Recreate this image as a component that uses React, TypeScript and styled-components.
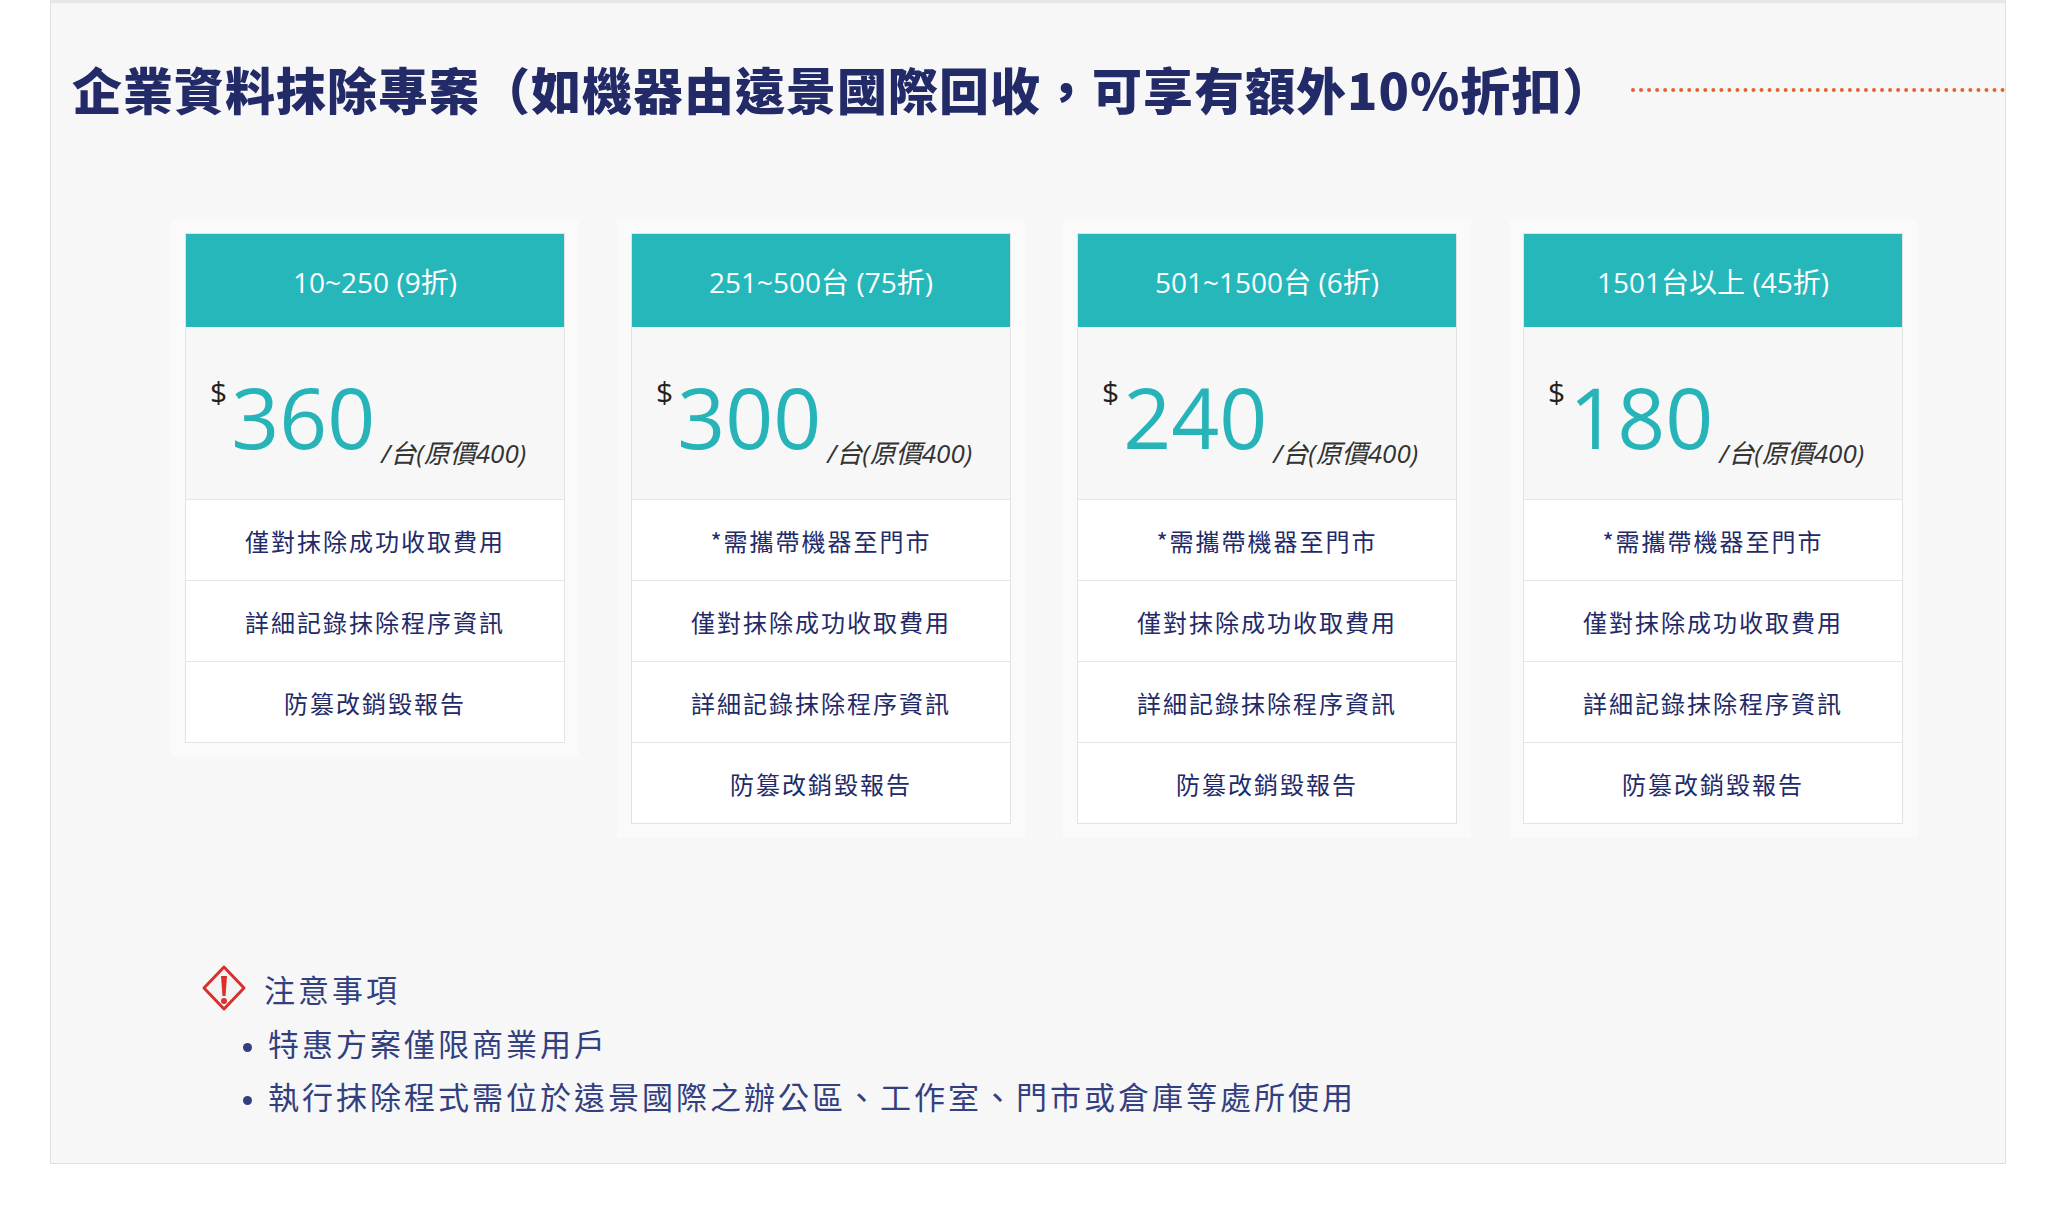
import styled, { createGlobalStyle } from "styled-components";

const Global = createGlobalStyle`
  body { margin: 0; background: #fff; font-family: "Open Sans", "Noto Sans CJK TC", sans-serif; }
`;

const Panel = styled.div`
  margin: 0 42px 0 50px;
  height: 1164px;
  box-sizing: border-box;
  background: #f7f7f7;
  border: 1px solid #e0e0e0;
  border-top: 3px solid #e6e6e6;
  padding: 50px 0 0 21px;
`;

const TitleRow = styled.div`
  display: flex;
  align-items: center;
  gap: 18px;
`;

const Title = styled.h1`
  margin: 0;
  font-family: "Noto Sans CJK TC", sans-serif;
  font-weight: 900;
  font-size: 50px;
  line-height: 70px;
  color: #232a68;
  white-space: nowrap;
  letter-spacing: 1px;
`;

const Dots = styled.div`
  flex: 1;
  border-top: 4px dotted #e8602c;
  margin-top: 4px;
`;

const Cards = styled.div`
  display: flex;
  align-items: flex-start;
  gap: 66px;
  margin: 110px 0 0 113px;
`;

const Card = styled.div`
  width: 378px;
  background: #fff;
  border: 1px solid #e3e3e3;
  box-shadow: 0 0 0 14px rgba(255, 255, 255, 0.35);
`;

const Head = styled.div`
  height: 93px;
  background: #26b7bb;
  color: #fff;
  display: flex;
  align-items: center;
  justify-content: center;
  font-size: 28px;
  font-family: "Open Sans", "Noto Sans CJK TC", sans-serif;
`;

const PriceBox = styled.div`
  height: 173px;
  background: #f7f7f7;
  display: flex;
  align-items: flex-end;
  padding: 0 0 42px 24px;
  box-sizing: border-box;
  border-bottom: 1px solid #e6e6e6;
`;

const Dollar = styled.span`
  font-size: 30px;
  color: #222;
  align-self: flex-start;
  margin-top: 44px;
  margin-right: 4px;
`;

const Amount = styled.span`
  font-size: 84px;
  line-height: 80px;
  color: #26b4b9;
`;

const Unit = styled.span`
  font-size: 26px;
  font-style: italic;
  color: #333;
  margin-left: 6px;
  margin-bottom: -14px;
  font-family: "Open Sans", "Noto Sans CJK TC", sans-serif;
`;

const Row = styled.div`
  height: 80px;
  display: flex;
  align-items: center;
  justify-content: center;
  font-family: "Noto Sans CJK TC", sans-serif;
  font-size: 24px;
  letter-spacing: 2px;
  color: #232a68;
  border-bottom: 1px solid #e6e6e6;
  &:last-child { border-bottom: none; }
`;

const Notes = styled.div`
  margin: 140px 0 0 128px;
  color: #33407f;
  font-family: "Noto Sans CJK TC", sans-serif;
`;

const NoteHead = styled.div`
  display: flex;
  align-items: center;
  gap: 16px;
  font-size: 31px;
  letter-spacing: 3px;
`;

const List = styled.ul`
  margin: 4px 0 0;
  padding-left: 68px;
  font-size: 31px;
  line-height: 53px;
  letter-spacing: 3px;
  li::marker { font-size: 24px; }
`;

const plans = [
  { head: "10~250 (9折)", price: "360", rows: ["僅對抹除成功收取費用", "詳細記錄抹除程序資訊", "防篡改銷毀報告"] },
  { head: "251~500台 (75折)", price: "300", rows: ["*需攜帶機器至門市", "僅對抹除成功收取費用", "詳細記錄抹除程序資訊", "防篡改銷毀報告"] },
  { head: "501~1500台 (6折)", price: "240", rows: ["*需攜帶機器至門市", "僅對抹除成功收取費用", "詳細記錄抹除程序資訊", "防篡改銷毀報告"] },
  { head: "1501台以上 (45折)", price: "180", rows: ["*需攜帶機器至門市", "僅對抹除成功收取費用", "詳細記錄抹除程序資訊", "防篡改銷毀報告"] },
];

function WarnIcon() {
  return (
    <svg width="48" height="48" viewBox="0 0 48 48">
      <path d="M24 3 L44 24 L24 45 L4 24 Z" fill="#f3f3f3" stroke="#d9302a" strokeWidth="3" strokeLinejoin="round" />
      <path d="M21 12 h6 l-1.5 20 h-3 Z" fill="#d9302a" />
      <circle cx="24" cy="37" r="3" fill="#d9302a" />
    </svg>
  );
}

export default function App() {
  return (
    <>
      <Global />
      <Panel>
        <TitleRow>
          <Title>企業資料抹除專案（如機器由遠景國際回收，可享有額外10%折扣）</Title>
          <Dots />
        </TitleRow>
        <Cards>
          {plans.map((p) => (
            <Card key={p.head}>
              <Head>{p.head}</Head>
              <PriceBox>
                <Dollar>$</Dollar>
                <Amount>{p.price}</Amount>
                <Unit>/台(原價400)</Unit>
              </PriceBox>
              {p.rows.map((r) => (
                <Row key={r}>{r}</Row>
              ))}
            </Card>
          ))}
        </Cards>
        <Notes>
          <NoteHead>
            <WarnIcon />
            注意事項
          </NoteHead>
          <List>
            <li>特惠方案僅限商業用戶</li>
            <li>執行抹除程式需位於遠景國際之辦公區、工作室、門市或倉庫等處所使用</li>
          </List>
        </Notes>
      </Panel>
    </>
  );
}
